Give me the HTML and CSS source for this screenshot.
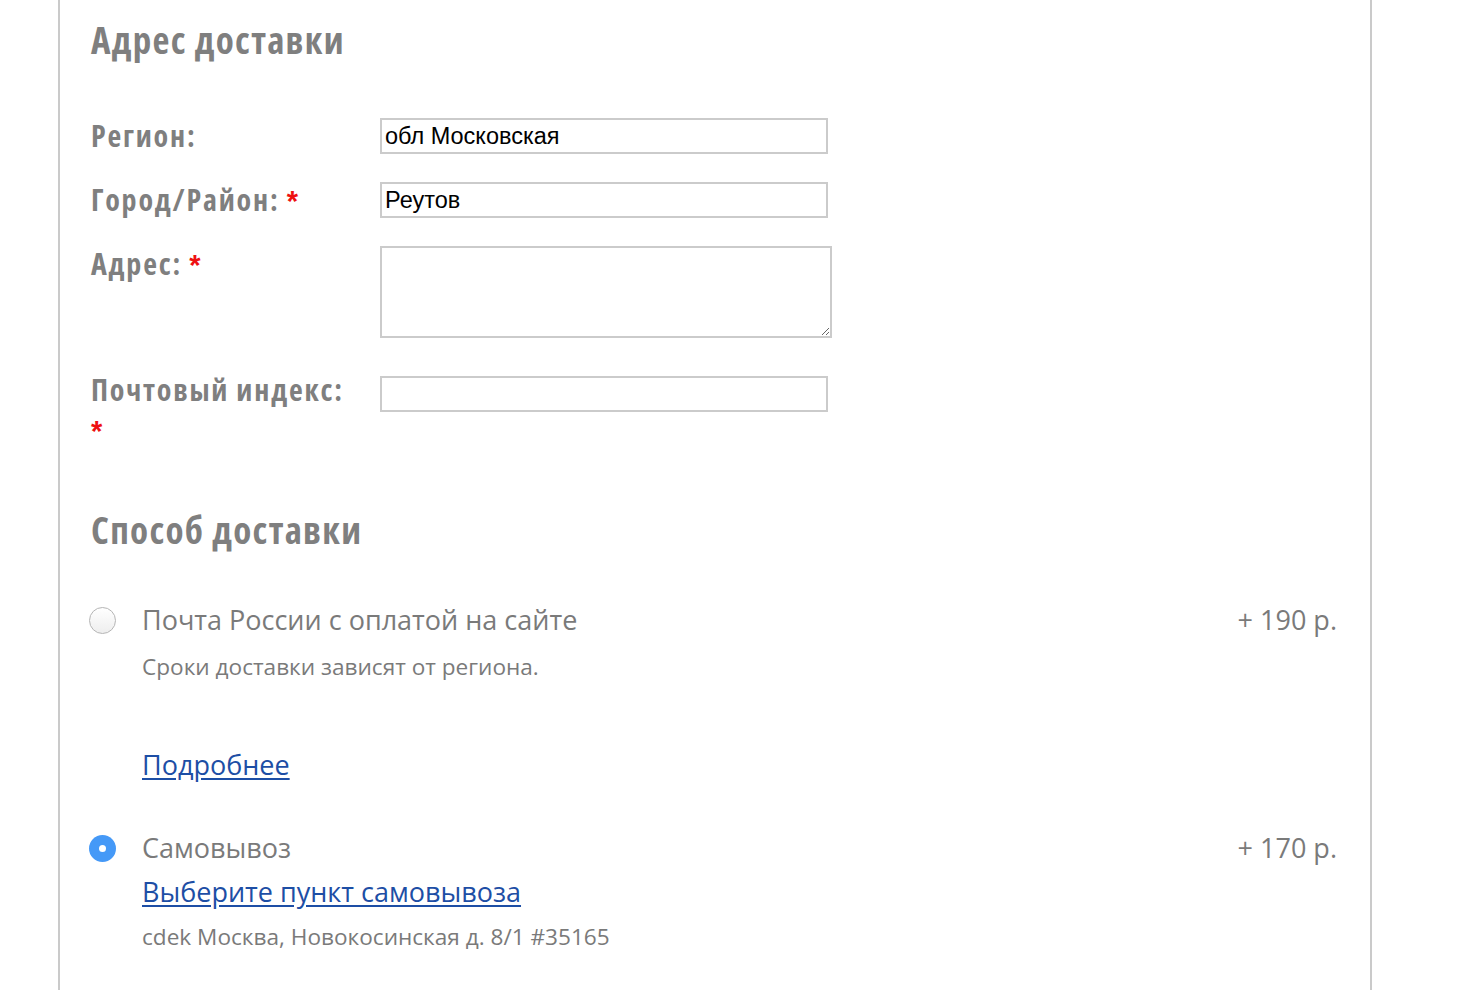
FILE: index.html
```html
<!DOCTYPE html>
<html lang="ru">
<head>
<meta charset="utf-8">
<title>Адрес доставки</title>
<link rel="stylesheet" href="styles.css">
</head>
<body>
<div class="page">
  <section class="block">
    <h2 class="title">Адрес доставки</h2>
    <div class="form">
      <div class="row">
        <label class="label">Регион:</label>
        <input class="input" type="text" value="обл Московская">
      </div>
      <div class="row">
        <label class="label">Город/Район: <span class="req">*</span></label>
        <input class="input" type="text" value="Реутов">
      </div>
      <div class="row row-area">
        <label class="label">Адрес: <span class="req">*</span></label>
        <textarea class="area"></textarea>
      </div>
      <div class="row row-last">
        <label class="label label-wrap">Почтовый индекс: <span class="req">*</span></label>
        <input class="input" type="text" value="">
      </div>
    </div>
  </section>

  <section class="block block-delivery">
    <h2 class="title">Способ доставки</h2>
    <div class="option">
      <span class="radio"></span>
      <div class="opt-body">
        <div class="opt-head">
          <span class="opt-name">Почта России с оплатой на сайте</span>
          <span class="opt-price">+ 190 р.</span>
        </div>
        <p class="opt-note">Сроки доставки зависят от региона.</p>
        <a class="opt-link more" href="#">Подробнее</a>
      </div>
    </div>
    <div class="option option-2">
      <span class="radio radio-on"></span>
      <div class="opt-body">
        <div class="opt-head">
          <span class="opt-name">Самовывоз</span>
          <span class="opt-price">+ 170 р.</span>
        </div>
        <a class="opt-link pick" href="#">Выберите пункт самовывоза</a>
        <p class="opt-note addr">cdek Москва, Новокосинская д. 8/1 #35165</p>
      </div>
    </div>
  </section>
</div>
</body>
</html>
```
FILE: styles.css
```css
html, body {
  margin: 0;
  padding: 0;
  background: #ffffff;
}
body {
  font-family: "Open Sans", "Noto Sans", sans-serif;
  color: #7b7b7b;
  overflow: hidden;
}
.page {
  box-sizing: border-box;
  margin-left: 58px;
  width: 1314px;
  min-height: 990px;
  border-left: 2px solid #cacaca;
  border-right: 2px solid #cacaca;
  padding: 0 33px 0 31px;
}
.title {
  margin: 0;
  font-family: "Open Sans", sans-serif;
  font-stretch: 75%;
  font-weight: 700;
  font-size: 37px;
  letter-spacing: 1.3px;
  line-height: 44px;
  color: #7f7f7f;
  padding-top: 18px;
}
.form {
  margin-top: 56px;
  display: flex;
  flex-direction: column;
}
.row {
  display: grid;
  grid-template-columns: 289px 1fr;
  align-items: start;
  margin-bottom: 28px;
}
.row-area { margin-bottom: 38px; }
.row-last { margin-bottom: 0; }
.label {
  display: block;
  height: 36px;
  font-family: "Open Sans", sans-serif;
  font-stretch: 75%;
  font-weight: 700;
  font-size: 30px;
  letter-spacing: 1.8px;
  line-height: 36px;
  color: #7f7f7f;
}
.label-wrap {
  width: 262px;
  height: auto;
  line-height: 40px;
  margin-top: -6px;
}
.req {
  color: #ee1111;
  font-family: "Liberation Sans", sans-serif;
  font-stretch: 100%;
  letter-spacing: 0;
  font-weight: 700;
  font-size: 29px;
  line-height: 1;
}
.input, .area {
  box-sizing: border-box;
  width: 448px;
  height: 36px;
  border: 2px solid #cbcbcb;
  padding: 0 3px;
  font-family: "Liberation Sans", Arial, sans-serif;
  font-size: 23.5px;
  color: #000;
  background: #fff;
  outline: none;
  margin: 0;
}
.area {
  width: 452px;
  height: 92px;
  resize: both;
  display: block;
}
.block-delivery .title {
  padding-top: 0;
  margin-top: 58px;
}
.option {
  display: flex;
  align-items: flex-start;
  margin-top: 48px;
}
.option-2 { margin-top: 43px; }
.radio {
  flex: none;
  box-sizing: border-box;
  width: 27px;
  height: 27px;
  border-radius: 50%;
  border: 1px solid #b5b5b5;
  background: linear-gradient(#ffffff, #eeeeee);
  margin-left: -2px;
  margin-top: 7px;
  margin-right: 26px;
}
.radio-on {
  border: none;
  background: #4599f7;
  position: relative;
}
.radio-on::after {
  content: "";
  position: absolute;
  left: 10px;
  top: 10px;
  width: 7px;
  height: 7px;
  border-radius: 50%;
  background: #fff;
}
.opt-body {
  flex: 1;
  display: flex;
  flex-direction: column;
  align-items: flex-start;
}
.opt-head {
  align-self: stretch;
  display: flex;
  justify-content: space-between;
  align-items: baseline;
}
.opt-name, .opt-price {
  font-size: 27px;
  line-height: 40px;
  color: #7a7a7a;
}
.opt-note {
  margin: 12px 0 0;
  font-size: 22.6px;
  line-height: 30px;
  color: #7a7a7a;
}
.opt-link {
  font-size: 27px;
  line-height: 40px;
  color: #1d4ea5;
  text-decoration: underline;
  text-underline-offset: 3px;
}
.more { margin-top: 63px; }
.pick { margin-top: 4px; }
.addr { margin-top: 10px; }
```
